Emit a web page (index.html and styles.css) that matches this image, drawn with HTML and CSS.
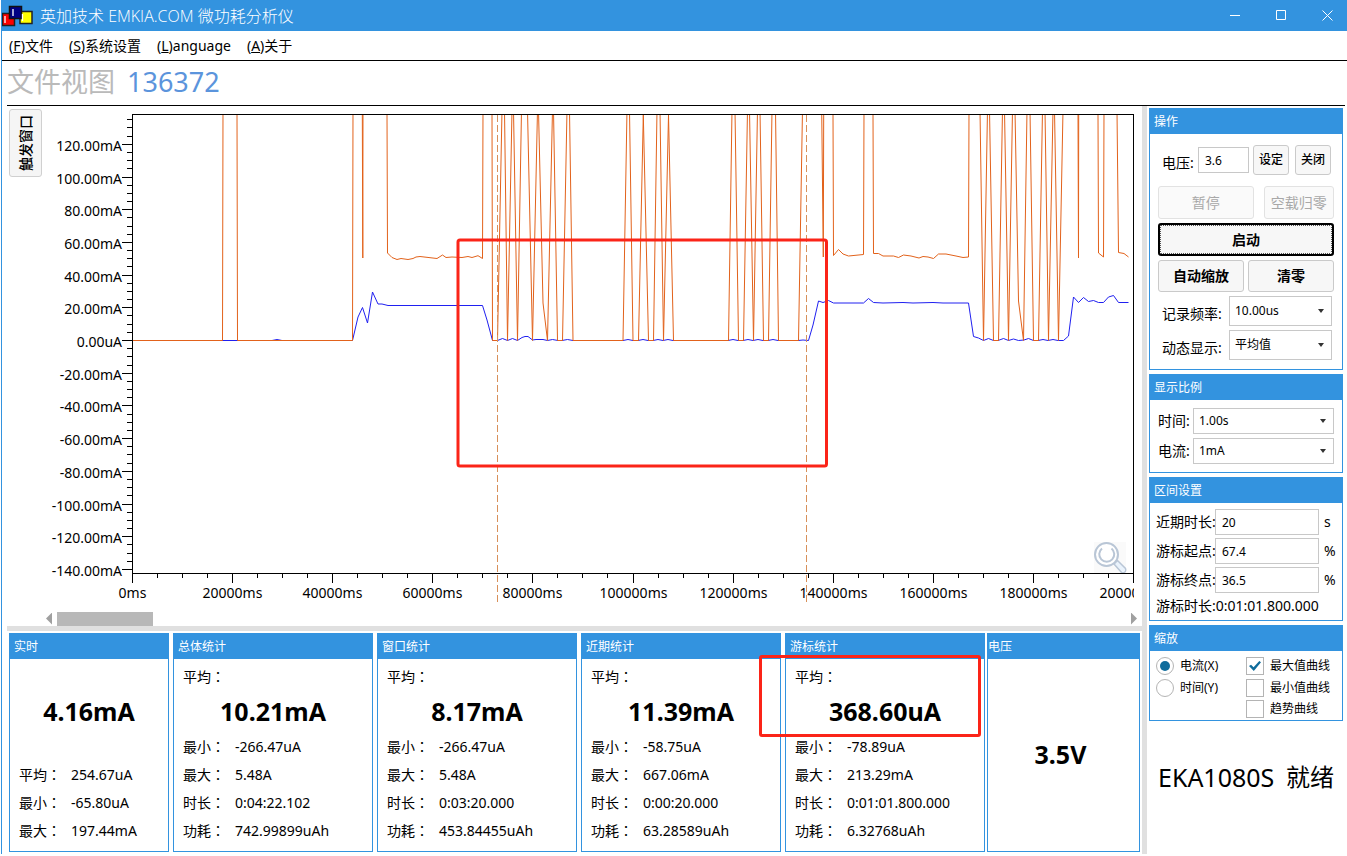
FILE: index.html
```html
<!DOCTYPE html>
<html>
<head>
<meta charset="utf-8">
<title>英加技术 EMKIA.COM 微功耗分析仪</title>
<link rel="stylesheet" href="styles.css">
</head>
<body>
<div class="app">
  <header class="titlebar">
    <svg class="logo" width="32" height="22" viewBox="1 0 32 22" aria-hidden="true">
      <rect x="1.500" y="8.500" width="12" height="12" fill="#f00" stroke="#222" stroke-width="1.500"/>
      <rect x="19" y="6.500" width="12" height="12" fill="#ff0" stroke="#222" stroke-width="1.500"/>
      <rect x="8.500" y="1.500" width="12" height="12" fill="#000084" stroke="#111" stroke-width="1.500"/>
      <path d="M4 11v7M12 4v7M21.500 9v7" stroke="#fff" stroke-width="1.300"/>
    </svg>
    <h1 class="title">英加技术 EMKIA.COM 微功耗分析仪</h1>
    <div class="window-buttons">
      <button type="button" aria-label="最小化"><svg width="11" height="11"><path d="M0 5.500h10"/></svg></button>
      <button type="button" aria-label="最大化"><svg width="11" height="11"><path d="M.5 .5h9v9h-9z"/></svg></button>
      <button type="button" aria-label="关闭窗口"><svg width="11" height="11"><path d="M.5 .5l10 10M10.500 .5l-10 10"/></svg></button>
    </div>
  </header>

  <nav class="menu">
    <a href="#file">(<u>F</u>)文件</a>
    <a href="#system">(<u>S</u>)系统设置</a>
    <a href="#language">(<u>L</u>)anguage</a>
    <a href="#about">(<u>A</u>)关于</a>
  </nav>

  <h2 class="view-title">文件视图 <span>136372</span></h2>

  <div class="workspace">
    <main class="left">
      <section class="chart-row">
        <button type="button" class="trigger"><span>触发窗口</span></button>
        <div class="chart-col">
          <svg class="chart" viewBox="45 106 1097 505" role="img" aria-label="电流曲线">
            <defs>
              <clipPath id="plot-clip"><rect x="132" y="115" width="1002" height="458"/></clipPath>
              <clipPath id="label-clip"><rect x="100" y="580" width="1034" height="30"/></clipPath>
            </defs>
            <g id="ticks" class="ticks"></g>
            <g id="y-labels" class="labels y-labels"></g>
            <g id="x-labels" class="labels x-labels" clip-path="url(#label-clip)"></g>
            <g class="magnifier">
              <rect x="1094" y="542" width="32" height="31" class="magnifier-bg"/>
              <path d="M1114 564l3.500-3.500 8 8q1.500 4-3.500 4.500z" fill="#eaf3fc" stroke="#b9c6d6" stroke-width="1.500"/>
              <circle cx="1106.500" cy="554.500" r="11.500" fill="#fff" stroke="#b9c6d6" stroke-width="2"/>
              <path d="M1102 548.500a7.500 7.500 0 1 0 9.500 0" fill="none" stroke="#b9c6d6" stroke-width="2"/>
            </g>
            <g clip-path="url(#plot-clip)">
              <path class="avg" d="M132 340.500H272L277 339.500L282 340.500H352.500L358 317L362.500 307.500L367.500 323L372.500 292L378 304L382 304L388 305.500H482.500L487 320L492.500 340.500H497.500L502.500 338.500L507.500 340.500L512.500 338.500L517.500 340.500L522 337.500L525 336.500H528L532.500 340L536 339.500H543L547.500 340.500L552.500 339.500L558 340.500H562L567.500 339.500L573 340.500H623L628 339.500L633 340.500H638L643 339.500L648 340.500H653L658 339.500L663 340.500L668 339.500L673 340.500H728L733 339.500L738 340.500H743L748 339.500L753 340.500L758 339.500L763 340.500H768L773 339.500L778 340.500H798L803 340L808.500 340.500L813 325L818.500 301L823 302.500L828.500 300.500L833.500 303H863.500L868.500 298.500L873.500 302.500L883 303L903 302.500L913 303L933 302.500L943 303H968.500L973.500 336.500L978.500 338L983.500 340.500L988.500 338.500L993.500 340.500H998L1003.500 338.500L1008.500 340.500L1013.500 339L1018.500 340.500L1024 340L1028.500 338.500L1033.500 340.500H1038L1043 339.500L1048 340.500L1053 339.500L1058 340.500H1063.500L1068.500 336L1073.500 297L1078.500 302.500L1083.500 297.500L1088.500 301.500L1093.500 300.500L1098.500 302.500H1103.500L1108.500 297L1113.500 295.500L1118.500 302.500H1128.500"/>
              <path class="max" d="M132 340.500H222.500L223 110M237 110L237.500 340.500H352.500L353 110M362.300 110L362.800 258L363 110M387 110L387.500 253L392 257.500L397 259.500L401 258.500L408 259.500L413 258.500L416 257L420 256.500L437 258.500L442.500 255L446 257.500L452 257L462 257.500L468 256.500L472 257.500L478 255.700L482.500 258.500L483 110M492 110L492.500 340.500H497.500L502 110M504.500 110L507.500 340.500L512 110M513.500 110L517.500 340.500L521.500 110M527.500 110L532.500 340.500L537.500 110M538.500 110L543 303L547.500 340.500L552.500 110M553.500 110L557.500 340.500H562.500L567 110M569.500 110L573 340.500H623L627 110M629.500 110L633 340.500H638.500L643.300 115L648.500 340.500H653.500L657 110M660 110L663.500 340.500L668.500 115L673.500 340.500H728.500L732 110M735 110L738.500 340.500H743.500L747.500 110M749.500 110L753.500 340.500L757.500 110M760 110L763.500 340.500H768.500L772 110M775.500 110L778.500 340.500H798.500L802.500 110M821.700 110L823.300 257L823.700 110M833 110L833.500 255.500L838.500 249.500L843 254L848.500 256L863.500 254.500L864 110M873 110L873.500 253.500H878.500L883 256H893.500L898.500 257.500L903.500 255L911 256L919 258L923 256.500L928 257L933.500 258.500L938.500 254H946L956 256L963 257.500L968.500 257L969 110M980 110L983.500 340.500L987.500 110M989.500 110L993.500 340.500H998.500L1002.500 110M1004.500 110L1008.500 340.500L1012.500 110M1015 110L1018.500 301L1023.500 340.500L1027 110M1030 110L1033.500 340.500H1038.500L1042.500 110M1045 110L1048.500 340.500L1053 110M1054.500 110L1058.500 340.500L1063 110M1078 110L1078.500 258L1078.700 110M1098 110L1098.500 253L1103.500 257L1104 110M1117 110L1118.500 252.500L1124 253.500L1128.500 257"/>
            </g>
            <rect x="132.500" y="114.500" width="1001" height="459" class="frame"/>
            <path class="cursor" d="M497.500 115V602M806.500 115V602"/>
            <rect x="458" y="240" width="368.500" height="226" rx="2" class="mark-rect"/>
          </svg>
          <div class="scrollbar">
            <button type="button" class="arrow arrow-left" aria-label="向左"></button>
            <div class="track"><div class="thumb"></div></div>
            <button type="button" class="arrow arrow-right" aria-label="向右"></button>
          </div>
        </div>
      </section>

      <section class="cards">
        <article class="card live">
          <h3>实时</h3>
          <div class="card-body">
            <strong>4.16mA</strong>
            <dl>
              <div><dt>平均：</dt><dd>254.67uA</dd></div>
              <div><dt>最小：</dt><dd>-65.80uA</dd></div>
              <div><dt>最大：</dt><dd>197.44mA</dd></div>
            </dl>
          </div>
        </article>
        <article class="card">
          <h3>总体统计</h3>
          <div class="card-body">
            <p>平均：</p>
            <strong>10.21mA</strong>
            <dl>
              <div><dt>最小：</dt><dd>-266.47uA</dd></div>
              <div><dt>最大：</dt><dd>5.48A</dd></div>
              <div><dt>时长：</dt><dd>0:04:22.102</dd></div>
              <div><dt>功耗：</dt><dd>742.99899uAh</dd></div>
            </dl>
          </div>
        </article>
        <article class="card">
          <h3>窗口统计</h3>
          <div class="card-body">
            <p>平均：</p>
            <strong>8.17mA</strong>
            <dl>
              <div><dt>最小：</dt><dd>-266.47uA</dd></div>
              <div><dt>最大：</dt><dd>5.48A</dd></div>
              <div><dt>时长：</dt><dd>0:03:20.000</dd></div>
              <div><dt>功耗：</dt><dd>453.84455uAh</dd></div>
            </dl>
          </div>
        </article>
        <article class="card">
          <h3>近期统计</h3>
          <div class="card-body">
            <p>平均：</p>
            <strong>11.39mA</strong>
            <dl>
              <div><dt>最小：</dt><dd>-58.75uA</dd></div>
              <div><dt>最大：</dt><dd>667.06mA</dd></div>
              <div><dt>时长：</dt><dd>0:00:20.000</dd></div>
              <div><dt>功耗：</dt><dd>63.28589uAh</dd></div>
            </dl>
          </div>
        </article>
        <article class="card marked">
          <h3>游标统计</h3>
          <div class="card-body">
            <p>平均：</p>
            <strong>368.60uA</strong>
            <dl>
              <div><dt>最小：</dt><dd>-78.89uA</dd></div>
              <div><dt>最大：</dt><dd>213.29mA</dd></div>
              <div><dt>时长：</dt><dd>0:01:01.800.000</dd></div>
              <div><dt>功耗：</dt><dd>6.32768uAh</dd></div>
            </dl>
          </div>
          <div class="mark"></div>
        </article>
        <article class="card voltage">
          <h3>电压</h3>
          <div class="card-body"><strong>3.5V</strong></div>
        </article>
      </section>
    </main>

    <div class="splitter"></div>

    <aside class="sidebar">
      <section class="panel">
        <h3>操作</h3>
        <div class="ops">
          <div class="row volt-row">
            <label for="volt">电压:</label>
            <input id="volt" type="text" value="3.6">
            <button type="button" class="btn small">设定</button>
            <button type="button" class="btn small close">关闭</button>
          </div>
          <div class="row pause-row">
            <button type="button" class="btn" disabled>暂停</button>
            <button type="button" class="btn" disabled>空载归零</button>
          </div>
          <button type="button" class="btn start">启动</button>
          <div class="row pair-row">
            <button type="button" class="btn strong">自动缩放</button>
            <button type="button" class="btn strong">清零</button>
          </div>
          <div class="row select-row">
            <label for="rate">记录频率:</label>
            <span class="select"><select id="rate"><option>10.00us</option></select></span>
          </div>
          <div class="row select-row">
            <label for="dynamic">动态显示:</label>
            <span class="select"><select id="dynamic"><option>平均值</option></select></span>
          </div>
        </div>
      </section>

      <section class="panel">
        <h3>显示比例</h3>
        <div class="scale">
          <label for="time-scale">时间:</label>
          <span class="select"><select id="time-scale"><option>1.00s</option></select></span>
          <label for="current-scale">电流:</label>
          <span class="select"><select id="current-scale"><option>1mA</option></select></span>
        </div>
      </section>

      <section class="panel">
        <h3>区间设置</h3>
        <div class="range">
          <label for="recent">近期时长:</label><input id="recent" type="text" value="20"><span>s</span>
          <label for="start">游标起点:</label><input id="start" type="text" value="67.4"><span>%</span>
          <label for="end">游标终点:</label><input id="end" type="text" value="36.5"><span>%</span>
          <p>游标时长:0:01:01.800.000</p>
        </div>
      </section>

      <section class="panel">
        <h3>缩放</h3>
        <div class="zoom">
          <div class="choices">
            <label><input type="radio" name="axis" checked>电流(X)</label>
            <label><input type="radio" name="axis">时间(Y)</label>
          </div>
          <div class="choices">
            <label><input type="checkbox" checked>最大值曲线</label>
            <label><input type="checkbox">最小值曲线</label>
            <label class="tight"><input type="checkbox">趋势曲线</label>
          </div>
        </div>
      </section>

      <p class="status"><span>EKA1080S</span><span>就绪</span></p>
    </aside>
  </div>
</div>
<script src="chart.js"></script>
</body>
</html>
```
FILE: styles.css
```css
* { box-sizing: border-box; }

body, h1, h2, h3, p, dl, dd { margin: 0; }

body {
  background: #fff;
  color: #000;
  font: 14px/20px "Noto Sans", "Noto Sans CJK SC", sans-serif;
}

button, input, select { font: inherit; color: inherit; }
h1, h2, h3 { font-weight: 400; }

.app {
  margin-left: 1px;
  border-left: 1px solid #3393df;
}

.titlebar {
  display: flex;
  align-items: center;
  height: 31px;
  background: #3393df;
  color: #fff;
}
.logo { margin-right: 6px; }
.title {
  flex: 1;
  font: 300 16px/30px "Open Sans", "Noto Sans CJK SC", sans-serif;
}
.window-buttons { display: flex; gap: 6px; }
.window-buttons button {
  width: 40px;
  height: 30px;
  padding: 0;
  border: 0;
  background: none;
}
.window-buttons svg {
  display: block;
  margin: 0 auto;
  fill: none;
  stroke: #fff;
}

.menu {
  display: flex;
  gap: 16px;
  height: 30px;
  padding: 5px 7px;
  border-bottom: 1px solid #000;
}
.menu a { color: #000; text-decoration: none; }

.view-title {
  display: flex;
  gap: 12px;
  height: 45px;
  margin: 0 2px 0 5px;
  border-bottom: 1px solid #000;
  color: #bababa;
  font-size: 27px;
  line-height: 42px;
}
.view-title span { color: #5b94dc; }

.workspace {
  display: grid;
  grid-template-columns: 1fr 5px 200px;
  min-height: 748px;
  padding-left: 5px;
}
.splitter { background: #e0e0e0; }

.chart-row {
  display: grid;
  grid-template-columns: 38px 1fr;
}
.trigger {
  width: 33px;
  height: 68px;
  margin: 3px 2px;
  padding: 0;
  border: 1px solid #d0d0d0;
  border-radius: 3px;
  background: #f5f5f5;
  font-weight: 500;
}
.trigger span {
  display: block;
  margin: 0 auto;
  line-height: 31px;
  writing-mode: vertical-rl;
  text-orientation: sideways;
  transform: rotate(180deg);
}

.chart { display: block; width: 100%; height: auto; }
.ticks { stroke: #000; stroke-width: 1; }
.labels { font-size: 14px; }
.y-labels { text-anchor: end; }
.x-labels { text-anchor: middle; }
.frame { fill: none; stroke: #000; }
.avg { fill: none; stroke: #2020f0; }
.max { fill: none; stroke: #e2621b; }
.cursor { stroke: #d8905a; stroke-dasharray: 7 3; }
.mark-rect { fill: none; stroke: #fb2418; stroke-width: 3; }
.magnifier-bg { fill: #fafafa; }

.scrollbar {
  display: flex;
  align-items: center;
  gap: 5px;
  height: 15px;
  padding: 0 5px 0 1px;
}
.arrow {
  width: 6px;
  height: 12px;
  padding: 0;
  border: 0;
  background: #a0a0a0;
}
.arrow-left { clip-path: polygon(100% 0, 100% 100%, 0 50%); }
.arrow-right { clip-path: polygon(0 0, 100% 50%, 0 100%); }
.track { flex: 1; }
.thumb { width: 9%; height: 14px; background: #b8b8b8; }

.cards {
  display: grid;
  grid-template-columns: 160fr 200fr 200fr 200fr 200fr 151fr;
  gap: 4px;
  padding: 2px 2px 0;
  border-top: 5px solid #e0e0e0;
}
.card, .panel { border: 1px solid #3393df; }
.card h3, .panel h3 {
  height: 25px;
  padding-left: 4px;
  background: #3393df;
  color: #fff;
  font-size: 12px;
  line-height: 25px;
}
.card-body {
  display: flex;
  flex-direction: column;
  justify-content: flex-end;
  height: 192px;
  padding: 4px 9px 6px;
}
.card p, .card dl { line-height: 28px; }
.card p, .card dt { font-family: "Noto Sans CJK TC", sans-serif; }
.card dt { line-height: 26px; }
.card strong {
  font-size: 25px;
  line-height: 40px;
  text-align: center;
}
.card p { line-height: 26px; margin-bottom: 2px; }
.card dl div { display: flex; height: 28px; }
.card dt { flex: 0 0 52px; }
.live strong { margin-bottom: 30px; }
.card dl { padding-top: 2px; }
.live dl { padding-top: 0; }
.marked { position: relative; }
.mark {
  position: absolute;
  z-index: 1;
  top: 21px;
  right: 3px;
  left: -27px;
  height: 82px;
  border: 3px solid #fb2418;
  border-radius: 3px;
}
.voltage { margin-left: -2px; }
.voltage h3 { padding-left: 0; }
.voltage .card-body { justify-content: center; }
.voltage strong { padding-right: 6px; }

.sidebar {
  display: flex;
  flex-direction: column;
  gap: 4px;
  padding: 2px 4px 0 2px;
}

.row { display: flex; }

input[type="text"], select {
  width: 100%;
  min-width: 0;
  height: 26px;
  padding: 0 6px;
  border: 1px solid #c8c8c8;
  border-radius: 0;
  background: #fff;
  font-size: 12px;
}
.select { position: relative; display: block; flex: 1; }
.select::after {
  content: "";
  position: absolute;
  top: 50%;
  right: 8px;
  margin-top: -2px;
  border: 3px solid transparent;
  border-top: 4px solid #333;
  border-bottom: 0;
}
select { display: block; padding: 0 5px; appearance: none; }

.btn {
  height: 33px;
  padding: 0;
  border: 1px solid #cacaca;
  border-radius: 3px;
  background: #f7f7f7;
}
.btn:disabled { border-color: #e2e2e2; background: #fafafa; color: #a8a8a8; }
.btn.small { flex: 0 0 36px; height: 30px; font-size: 12px; font-weight: 500; }
.btn.strong, .btn.start { font-weight: 600; }
.btn.strong { height: 32px; }
.btn.start {
  border: 2px solid #000;
  outline: 1px dotted #555;
  outline-offset: -3px;
}

.ops {
  display: flex;
  flex-direction: column;
  gap: 4px;
  padding: 11px 8px 9px;
}
.volt-row { align-items: center; gap: 4px; padding: 0 3px 0 4px; margin-bottom: 7px; }
.volt-row label { flex: 0 0 32px; padding-top: 6px; }
.close { margin-left: 2px; }
.pause-row { gap: 10px; }
.pause-row .btn:first-child { flex: 96; }
.pause-row .btn:last-child { flex: 70; }
.pair-row { gap: 4px; }
.pair-row .btn { flex: 1; }
.select-row { align-items: center; padding: 0 2px 0 4px; }
.select-row label { flex: 0 0 67px; padding-top: 5px; }
.select-row select { height: 30px; }

.scale {
  display: grid;
  grid-template-columns: 35px 1fr;
  gap: 4px 0;
  align-items: center;
  padding: 8px;
}
.scale select { height: 26px; }

.range {
  display: grid;
  grid-template-columns: 59px 1fr 18px;
  gap: 3px 0;
  align-items: center;
  padding: 6px 5px 5px 6px;
}
.range label { white-space: nowrap; }
.range span { padding-left: 5px; }
.range p { grid-column: 1 / -1; line-height: 19px; }

.zoom {
  display: grid;
  grid-template-columns: 90px 1fr;
  padding: 4px 0 2px 6px;
  font-size: 12px;
}
.choices { display: flex; flex-direction: column; }
.choices label {
  display: flex;
  align-items: center;
  gap: 6px;
  height: 22px;
  white-space: nowrap;
}
.choices .tight { height: 19px; }
.choices input {
  appearance: none;
  display: grid;
  place-content: center;
  width: 18px;
  height: 18px;
  margin: 0;
  border: 1px solid #b4b4b4;
  background: #fff;
}
.choices input[type="radio"] { border-radius: 50%; }
.choices input[type="radio"]:checked::before {
  content: "";
  width: 10px;
  height: 10px;
  border-radius: 50%;
  background: #0f6c9c;
}
.choices input[type="checkbox"]:checked::before {
  content: "";
  width: 12px;
  height: 10px;
  background: #0f6c9c;
  clip-path: polygon(0 50%, 17% 38%, 38% 62%, 86% 0, 100% 12%, 40% 100%);
}

.status {
  display: flex;
  justify-content: space-between;
  padding: 34px 9px 0;
  font-size: 24px;
  line-height: 36px;
}
.status span:first-child { font-size: 25px; }
```
FILE: chart.js
```js
const NS = "http://www.w3.org/2000/svg";
const ticks = document.getElementById("ticks");
const yLabels = document.getElementById("y-labels");
const xLabels = document.getElementById("x-labels");

function line(x1, y1, x2, y2) {
  const el = document.createElementNS(NS, "line");
  Object.entries({ x1, y1, x2, y2 }).forEach(([k, v]) => el.setAttribute(k, v));
  ticks.append(el);
}

function label(group, x, y, text) {
  const el = document.createElementNS(NS, "text");
  el.setAttribute("x", x);
  el.setAttribute("y", y);
  el.textContent = text;
  group.append(el);
}

// Vertical axis: a labelled tick every 20 mA, a short one every 5 mA.
for (let mA = 135; mA >= -140; mA -= 5) {
  const y = Math.round(341 - mA * 1.635) - 0.5;
  const major = mA % 20 === 0;
  line(major ? 122 : 127, y, 132, y);
  if (major) {
    label(yLabels, 122, y + 6.5, mA === 0 ? "0.00uA" : mA.toFixed(2) + "mA");
  }
}

// Horizontal axis: a labelled tick every 20 s, a short one every 5 s.
for (let i = 0; i <= 40; i++) {
  const x = 132.5 + i * 25 + (i >= 20 ? 1 : 0);
  const major = i % 4 === 0;
  line(x, 573, x, major ? 583 : 578);
  if (major) label(xLabels, x, 598, i * 5000 + "ms");
}
```
